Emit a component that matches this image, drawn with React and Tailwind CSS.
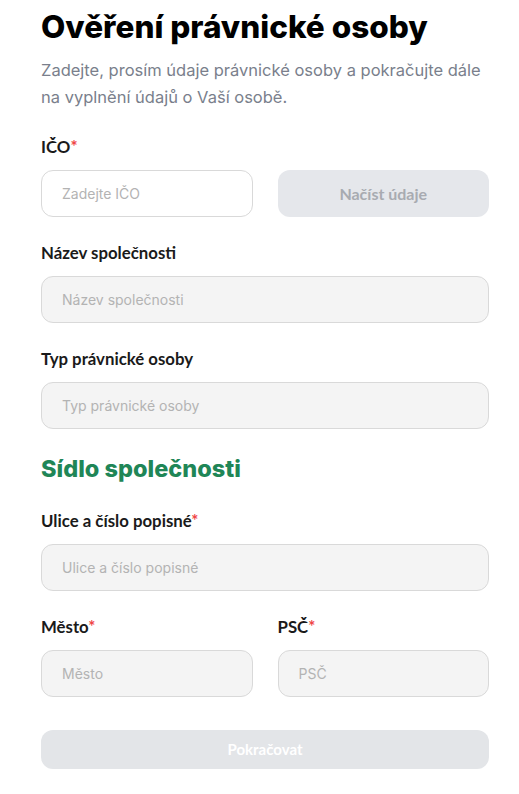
const Label = ({ children, required }) => (
  <label className="block text-[16.8px] leading-6 font-bold text-[#1a1a1a] mb-[11px]" style={{ fontFamily: 'Lato, sans-serif' }}>
    {children}
    {required && <span className="text-[#ef4444]">*</span>}
  </label>
);

const Input = ({ placeholder, disabled }) => (
  <input
    placeholder={placeholder}
    disabled={disabled}
    className={`w-full h-[47px] rounded-xl border border-[#d9d9d9] px-5 text-[14px] placeholder:text-[#b3b3b3] outline-none ${
      disabled ? 'bg-[#f4f4f4]' : 'bg-white'
    }`}
    style={{ fontFamily: 'Inter, sans-serif' }}
  />
);

export default function App() {
  return (
    <div className="min-h-screen bg-white px-[41px] pt-[7px]" style={{ fontFamily: 'Inter, sans-serif' }}>
      <h1 className="text-[31.5px] leading-10 font-extrabold text-black">
        Ověření právnické osoby
      </h1>
      <p className="mt-[10px] w-[460px] text-[16.5px] leading-[27px] text-[#7a7f8c]">
        Zadejte, prosím údaje právnické osoby a pokračujte dále na vyplnění údajů o Vaší osobě.
      </p>

      <div className="mt-6 w-[448px]">
        <Label required>IČO</Label>
        <div className="grid grid-cols-2 gap-[25px]">
          <Input placeholder="Zadejte IČO" />
          <button className="h-[47px] rounded-xl bg-[#e5e7eb] text-[16px] font-bold text-[#a8abb1]" style={{ fontFamily: 'Lato, sans-serif' }}>
            Načíst údaje
          </button>
        </div>

        <div className="mt-6">
          <Label>Název společnosti</Label>
          <Input placeholder="Název společnosti" disabled />
        </div>

        <div className="mt-6">
          <Label>Typ právnické osoby</Label>
          <Input placeholder="Typ právnické osoby" disabled />
        </div>

        <h2 className="mt-6 text-[23.5px] leading-8 font-extrabold text-[#1f8657]">
          Sídlo společnosti
        </h2>

        <div className="mt-6">
          <Label required>Ulice a číslo popisné</Label>
          <Input placeholder="Ulice a číslo popisné" disabled />
        </div>

        <div className="mt-6 grid grid-cols-2 gap-[25px]">
          <div>
            <Label required>Město</Label>
            <Input placeholder="Město" disabled />
          </div>
          <div>
            <Label required>PSČ</Label>
            <Input placeholder="PSČ" disabled />
          </div>
        </div>

        <button className="mt-[33px] w-full h-[39px] rounded-xl bg-[#e3e5e8] text-[15px] font-bold text-white" style={{ fontFamily: 'Lato, sans-serif' }}>
          Pokračovat
        </button>
      </div>
    </div>
  );
}
